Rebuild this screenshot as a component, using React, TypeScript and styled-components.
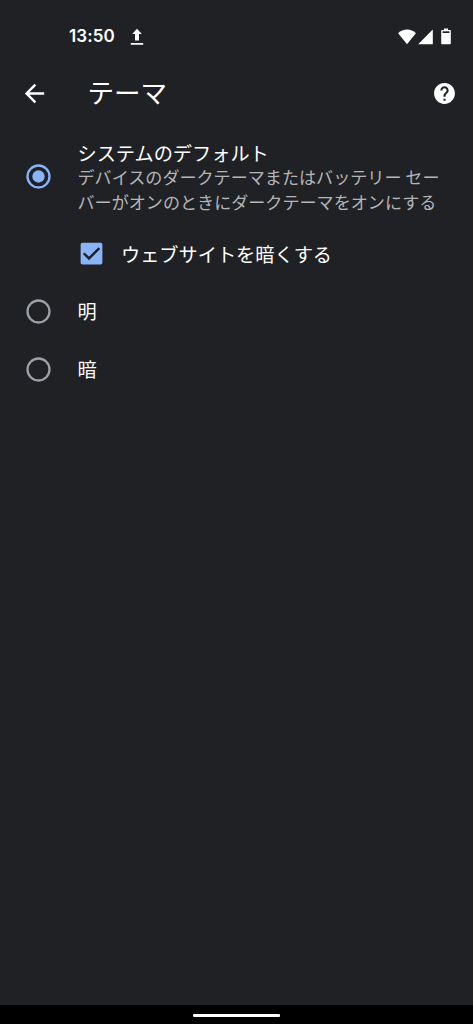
import React from "react";
import styled, { createGlobalStyle } from "styled-components";

const GlobalStyle = createGlobalStyle`
  *, *::before, *::after { box-sizing: border-box; }
  html, body { margin: 0; padding: 0; background: #202125; }
  svg { display: block; flex: none; }
`;

const Screen = styled.div`
  width: 473px;
  height: 1024px;
  display: flex;
  flex-direction: column;
  overflow: hidden;
  background: #202125;
  color: #fff;
  font-family: "Noto Sans CJK JP", sans-serif;
`;

const StatusBar = styled.header`
  height: 62px;
  padding: 11px 22px 0 69px;
  display: flex;
  align-items: center;
`;

const Clock = styled.span`
  width: 61px;
  padding-bottom: 2px;
  font: 600 17px/20px Inter, sans-serif;
  letter-spacing: 0.1px;
`;

const StatusIcons = styled.div`
  margin-left: auto;
  display: flex;
  align-items: center;
`;

const BatterySlot = styled.span`
  margin-left: 8px;
`;

const SignalSlot = styled.span`
  margin-left: 2px;
`;

const AppBar = styled.div`
  height: 63px;
  padding: 0 16.5px 0 20px;
  display: flex;
  align-items: center;
`;

const Heading = styled.h1`
  flex: 1;
  margin: 0 0 0 38.5px;
  padding-bottom: 3px;
  font-size: 26.5px;
  line-height: 36px;
  font-weight: 400;
`;

const Options = styled.main`
  flex: 1;
  padding-top: 7px;
`;

const Option = styled.label<{ $height: number }>`
  height: ${(p) => p.$height}px;
  padding: 0 30px 0 24px;
  display: flex;
  align-items: center;
`;

const OptionText = styled.div`
  flex: 1;
  margin-left: 24.5px;
  white-space: nowrap;
`;

const Label = styled.div`
  font-size: 19.2px;
  line-height: 24px;
`;

const Description = styled.div`
  color: #b4b5b7;
  font-size: 17.08px;
  line-height: 24.5px;
`;

const DetailedText = styled(OptionText)`
  padding-top: 3px;
`;

const SubOption = styled.label`
  height: 58px;
  margin-top: 4.5px;
  padding-left: 77px;
  display: flex;
  align-items: center;

  ${Label} {
    margin-left: 15px;
    padding-top: 1px;
  }
`;

const NavigationBar = styled.footer`
  height: 19px;
  background: #000;
  display: flex;
  justify-content: center;
  align-items: center;
  padding-top: 2px;
`;

const HomeHandle = styled.div`
  width: 87px;
  height: 3px;
  border-radius: 1px;
  background: #fff;
`;

function Radio({ selected = false }: { selected?: boolean }) {
  const color = selected ? "#8ab4f8" : "#9aa0a6";
  return (
    <svg width="29" height="29" viewBox="0 0 24 24">
      <circle cx="12" cy="12" r="9.1" fill="none" stroke={color} strokeWidth="1.9" />
      {selected && <circle cx="12" cy="12" r="5.1" fill={color} />}
    </svg>
  );
}

export default function App() {
  return (
    <>
      <GlobalStyle />
      <Screen>
        <StatusBar>
          <Clock>13:50</Clock>
          <svg width="14" height="18" viewBox="0 0 14 18" fill="#fff">
            <path d="M7 .8 11.8 6H9v6.500H5V6H2.200ZM.8 15h12.400v1.800H.8Z" />
          </svg>
          <StatusIcons>
            <svg width="18" height="16" viewBox="0 0 18 16" fill="#fff">
              <path d="M9 15.200.1 4.200C2.600 1.600 5.600.4 9 .4s6.400 1.200 8.900 3.800Z" />
            </svg>
            <SignalSlot>
              <svg width="15" height="16" viewBox="0 0 15 16" fill="#fff">
                <path d="M14.800.500v14.700H.2Z" />
              </svg>
            </SignalSlot>
            <BatterySlot>
              <svg width="10" height="17" viewBox="0 0 10 17">
                <path d="M3 .5h4v1.500h2q.8 0 .8.800v12.600q0 .8-.8.800H1q-.8 0-.8-.8V2.800q0-.8.800-.8h2Z" fill="#fff" />
                <path d="M1.600 3.300h6.800v1.700H1.600Z" fill="#202125" />
              </svg>
            </BatterySlot>
          </StatusIcons>
        </StatusBar>

        <AppBar>
          <svg width="29" height="29" viewBox="0 0 24 24" fill="#fff">
            <path d="M20 11H7.830l5.590-5.590L12 4l-8 8 8 8 1.410-1.410L7.830 13H20v-2z" />
          </svg>
          <Heading>テーマ</Heading>
          <svg width="25" height="25" viewBox="0 0 24 24" fill="#fff">
            <path d="M12 2C6.480 2 2 6.480 2 12s4.480 10 10 10 10-4.480 10-10S17.520 2 12 2zm1 17h-2v-2h2v2zm2.070-7.750-.9.920C13.450 12.900 13 13.500 13 15h-2v-.5c0-1.100.450-2.100 1.170-2.830l1.240-1.260c.370-.360.590-.860.590-1.410 0-1.100-.9-2-2-2s-2 .9-2 2H8c0-2.210 1.790-4 4-4s4 1.790 4 4c0 .880-.360 1.680-.930 2.250z" />
          </svg>
        </AppBar>

        <Options>
          <Option $height={88}>
            <Radio selected />
            <DetailedText>
              <Label>システムのデフォルト</Label>
              <Description>
                デバイスのダークテーマまたはバッテリー セー
                <br />
                バーがオンのときにダークテーマをオンにする
              </Description>
            </DetailedText>
          </Option>
          <SubOption>
            <svg width="29" height="29" viewBox="0 0 24 24">
              <rect x="3" y="3" width="18" height="18" rx="1.600" fill="#8ab4f8" />
              <path d="m5.600 11.800 4.300 4.300 8.600-8.600" fill="none" stroke="#202125" strokeWidth="2" />
            </svg>
            <Label>ウェブサイトを暗くする</Label>
          </SubOption>
          <Option $height={57.5}>
            <Radio />
            <OptionText>
              <Label>明</Label>
            </OptionText>
          </Option>
          <Option $height={58}>
            <Radio />
            <OptionText>
              <Label>暗</Label>
            </OptionText>
          </Option>
        </Options>

        <NavigationBar>
          <HomeHandle />
        </NavigationBar>
      </Screen>
    </>
  );
}
